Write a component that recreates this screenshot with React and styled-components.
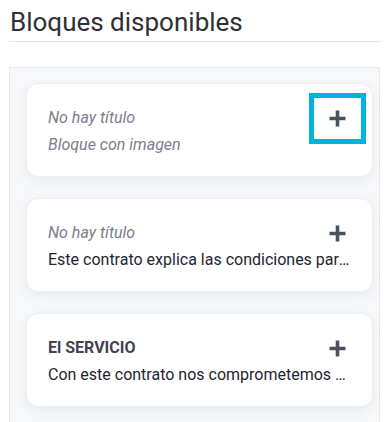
import React from 'react';
import styled, { createGlobalStyle } from 'styled-components';

const GlobalStyle = createGlobalStyle`
    html, body {
        margin: 0;
        padding: 0;
        background: #FFFFFF;
    }

    body {
        font-family: Roboto, "Liberation Sans", Arial, sans-serif;
        overflow: hidden;
    }
`;

const Page = styled.div`
    padding: 0 10px 0 9px;
`;

const Heading = styled.h2`
    margin: 6px 0 0;
    padding: 0 0 3px 1px;
    border-bottom: 1px solid #E4E6EA;

    font-size: 26px;
    font-weight: 400;
    line-height: 32px;
    color: #2F3033;
`;

const Panel = styled.div`
    margin-top: 25px;
    margin-right: 1px;
    min-height: 400px;
    padding: 15px 6px 0 16px;

    display: flex;
    flex-direction: column;
    gap: 21px;

    background: #F7F8FA;
    border: 1px solid #E6E8EC;
    box-sizing: border-box;
`;

const Card = styled.div`
    position: relative;
    height: 94px;
    padding: 21px 21px 0 21px;
    box-sizing: border-box;

    background: #FFFFFF;
    border: 1px solid #ECEEF2;
    border-radius: 12px;
    box-shadow: 0px 4px 12px rgba(30, 40, 60, 0.07);
`;

const Title = styled.div`
    font-size: 16px;
    line-height: 26px;
    font-style: ${p => (p.$empty ? 'italic' : 'normal')};
    font-weight: ${p => (p.$empty ? 400 : 700)};
    color: ${p => (p.$empty ? '#7A808C' : '#3E4450')};
    padding-right: 60px;
`;

const Description = styled.div`
    font-size: 16px;
    line-height: 27px;
    font-style: ${p => (p.$empty ? 'italic' : 'normal')};
    color: ${p => (p.$empty ? '#7A808C' : '#1F2530')};
    white-space: nowrap;
    overflow: hidden;
    text-overflow: ellipsis;
`;

const AddButton = styled.button`
    position: absolute;
    top: 9px;
    right: 6px;
    width: 57px;
    height: 51px;
    padding: 0;

    display: flex;
    align-items: center;
    justify-content: center;

    background: transparent;
    border: 5px solid ${p => (p.$focused ? '#00B4D8' : 'transparent')};
    box-sizing: border-box;
    cursor: pointer;
`;

const PlusIcon = () => (
    <svg width="19" height="19" viewBox="0 0 19 19">
        <path d="M9.5 1.5v16M1.5 9.5h16" stroke="#4A5361" strokeWidth="3.6" strokeLinecap="butt" />
    </svg>
);

const blocks = [
    { title: null, description: null, focused: true },
    { title: null, description: 'Este contrato explica las condiciones para el uso del servicio y la relación entre las partes.' },
    { title: 'El SERVICIO', description: 'Con este contrato nos comprometemos a prestar el servicio acordado.' },
];

export default function App() {
    return (
        <Page>
            <GlobalStyle />
            <Heading>Bloques disponibles</Heading>
            <Panel>
                {blocks.map((block, i) => (
                    <Card key={i}>
                        <Title $empty={!block.title}>{block.title || 'No hay título'}</Title>
                        <Description $empty={!block.description}>
                            {block.description || 'Bloque con imagen'}
                        </Description>
                        <AddButton $focused={block.focused} aria-label="Añadir bloque">
                            <PlusIcon />
                        </AddButton>
                    </Card>
                ))}
            </Panel>
        </Page>
    );
}
